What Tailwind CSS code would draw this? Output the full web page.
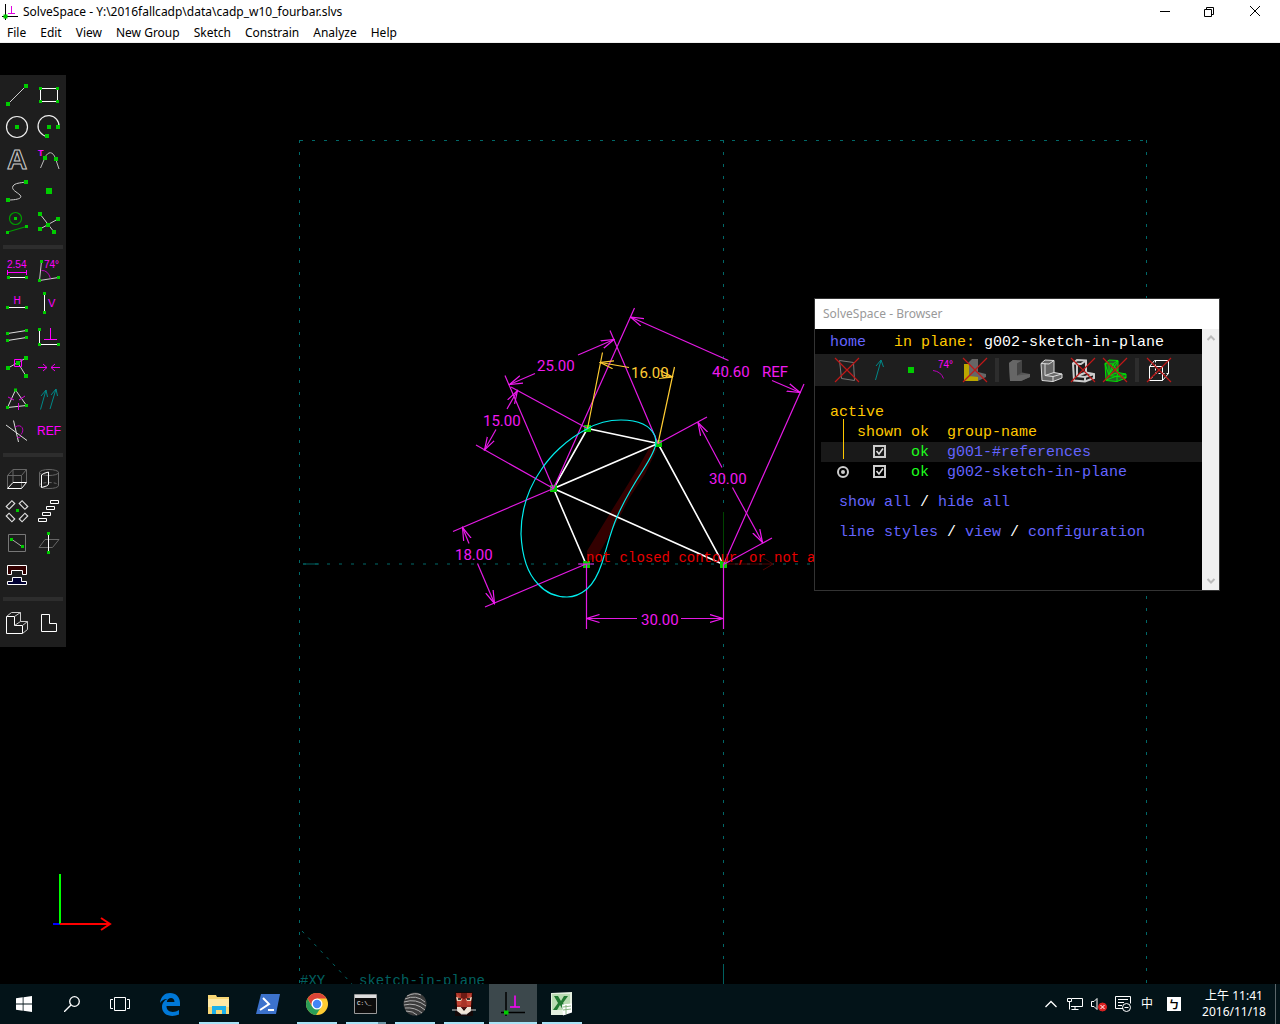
<!DOCTYPE html>
<html lang="en">
<head>
<meta charset="utf-8">
<title>SolveSpace - Y:\2016fallcadp\data\cadp_w10_fourbar.slvs</title>
<script src="https://cdn.jsdelivr.net/npm/@tailwindcss/browser@4"></script>
</head>
<body class="flex h-screen flex-col overflow-hidden bg-black font-['Noto_Sans','Noto_Sans_CJK_TC',sans-serif] text-xs text-black">

<header class="shrink-0 border-b border-[#f0f0f0] bg-white">
  <div class="flex h-6 items-center pr-[3px] pl-[2px]">
    <svg class="size-4 shrink-0" viewBox="0 0 16 16" fill="none" stroke="#000"><path d="M3.500 0v16M0 12.500h16"/><path d="M6 9.500h7M9.500 2v8" stroke="#e000e0"/><rect x="2" y="11" width="3" height="3" fill="#0c0" stroke="#0c0"/></svg>
    <h1 class="ml-[5px] flex-1 whitespace-nowrap">SolveSpace - Y:\2016fallcadp\data\cadp_w10_fourbar.slvs</h1>
    <button aria-label="Minimize" class="grid h-6 w-[45px] place-items-center"><svg class="size-3" viewBox="0 0 12 12" stroke="#000"><path d="M1 5.500h10"/></svg></button>
    <button aria-label="Restore" class="grid h-6 w-[45px] place-items-center"><svg class="size-3" viewBox="0 0 12 12" fill="none" stroke="#000"><path d="M.5 3.500h7v7h-7zM2.500 3.500v-2h7v7h-2"/></svg></button>
    <button aria-label="Close" class="grid h-6 w-[45px] place-items-center"><svg class="size-3" viewBox="0 0 12 12" stroke="#000"><path d="M1 0l10 10M11 0L1 10"/></svg></button>
  </div>
  <nav class="flex h-[18px] items-center" aria-label="Menu">
    <button class="px-[7px]">File</button><button class="px-[7px]">Edit</button><button class="px-[7px]">View</button><button class="px-[7px]">New Group</button><button class="px-[7px]">Sketch</button><button class="px-[7px]">Constrain</button><button class="px-[7px]">Analyze</button><button class="px-[7px]">Help</button>
  </nav>
</header>

<main class="relative min-h-0 flex-1 overflow-hidden bg-black">
  <svg class="block h-full w-full" viewBox="0 43 1280 941" preserveAspectRatio="xMidYMid slice" fill="none">
    <defs>
      <marker id="arr" viewBox="0 0 14 10" refX="13" refY="5" markerWidth="14" markerHeight="10" markerUnits="userSpaceOnUse" orient="auto-start-reverse"><path d="M0 1L13 5L0 9" fill="none" stroke="#f01af0" stroke-width="1.200"/></marker>
      <marker id="arrY" viewBox="0 0 14 10" refX="13" refY="5" markerWidth="14" markerHeight="10" markerUnits="userSpaceOnUse" orient="auto-start-reverse"><path d="M0 1L13 5L0 9" fill="none" stroke="#fc3" stroke-width="1.200"/></marker>
    </defs>
    <!-- workplane outline and axes -->
    <g stroke="#006868" stroke-dasharray="3 9">
      <path d="M300 140.500H1147M299.500 140V984M1146.500 140V984M303 564H1147M723.500 140V984"/>
      <path d="M302 931L352 984" stroke-dasharray="3 6"/>
    </g>
    <path d="M303 564h16M723.500 964v20" stroke="#006060"/>
    <path d="M723.500 512v52" stroke="#004400"/>
    <path d="M723.500 564h49M763 558l10 6l-10 6" stroke="#500000"/>
    <path d="M587 551V562L597 557L618 520L630 497L645 474L657 449L651 445L638 468L612 510Z" fill="#330000"/>
    <!-- linkage -->
    <path d="M587.500 428.500L658 443.500L553.500 488.500ZM553.500 488.500L586 564M553.500 488.500L723.500 564.500L658 443.500" stroke="#fff" stroke-width="1.600"/>
    <g fill="#00c800"><path d="M584 425h7v7h-7zM655 440h7v7h-7zM550 485h7v7h-7zM583 561h7v7h-7zM720 561h7v7h-7z"/></g>
    <!-- dimensions -->
    <g stroke="#e41ae4" stroke-width="1.200">
      <path d="M587.500 428.500L511 387M553.500 488.500L505 375.500M658 443.500L610 330.500M553.500 488.500L476 445M553.500 488.500L634.500 308M723.500 564.500L804 384M658 443.500L707 417M723.500 564.500L772 538M553.500 488.500L453 531.500M586 564L485 607M586.500 564V629M723.500 564V629M578 564h16"/>
      <g marker-end="url(#arr)">
        <path d="M535 373.500L509.500 384.500"/><path d="M578 355L614 339.500"/><path d="M496 429.500L484.500 450"/><path d="M507 409L517.500 390.500"/>
        <path d="M728.500 360.500L630.500 317"/><path d="M772 380.500L800 392.500"/><path d="M722 467.500L698 422.500"/><path d="M732.500 487.500L762.500 542.500"/>
        <path d="M469 543.500L462.500 527.500"/><path d="M477.500 563.500L494.500 603.500"/><path d="M637 618.500H586.500"/><path d="M681 618.500H723"/>
      </g>
    </g>
    <path d="M655 436C650 425 637 420 621 420C608 420 597 423 587 429C567 439 550 456 541 470C527 490 521 512 521 534C522 556 528 574 538 584C546 593 557 597 567 597C575 597 581 594 587 589C594 583 598 575 602 563C608 544 611 530 617 517C623 503 632 487 643 470C650 459 656 449 656 442Z" stroke="#0ee" stroke-width="1.200"/>
    <g stroke="#fc3" stroke-width="1.200">
      <path d="M587.500 428.500L602.500 352.500M658 443.500L674.500 367"/>
      <path d="M629 367.500L600.500 362.500" marker-end="url(#arrY)"/><path d="M662 375L672.500 377" marker-end="url(#arrY)"/>
    </g>
    <g fill="#f01af0" class="font-['Roboto',sans-serif] text-[15px] font-normal">
      <text x="537" y="371">25.00</text><text x="483" y="426">15.00</text><text x="712" y="377">40.60<tspan x="762">REF</tspan></text>
      <text x="709" y="484">30.00</text><text x="455" y="560">18.00</text><text x="641" y="625">30.00</text><text x="631" y="378" fill="#fc3">16.00</text>
    </g>
    <g class="font-['Liberation_Mono',monospace] text-[14px] whitespace-pre">
      <text x="586" y="562" fill="#e80000">not closed contour, <tspan x="749">or </tspan><tspan x="774">not </tspan><tspan x="807">all same style!</tspan></text>
      <text x="300" y="985" fill="#006060">#XY<tspan x="359">sketch-in-plane</tspan></text>
    </g>
    <!-- orientation axes -->
    <g stroke-width="2"><path d="M53 924h7" stroke="#00f"/><path d="M60 924V874" stroke="#0f0"/><path d="M60 924h50M101 918l9 6l-9 6" stroke="#f00"/></g>
  </svg>

  <!-- tool palette -->
  <aside class="absolute top-8 left-0 w-[66px] bg-[#1e1e1e] px-px pt-1 pb-2 font-['Liberation_Sans',sans-serif]" aria-label="Tools">
    <div class="grid grid-cols-2">
      <button aria-label="Line segment"><svg class="size-8" viewBox="0 0 32 32" fill="none" stroke="#ccc"><path d="M7 25L25 7"/><path d="M7 25h0M25 7h0" stroke="#0c0" stroke-width="4" stroke-linecap="square"/></svg></button>
      <button aria-label="Rectangle"><svg class="size-8" viewBox="0 0 32 32" fill="none" stroke="#fff"><path d="M7.500 9.500h17v13h-17z"/><path d="M7.500 9.500h0M24.500 9.500h0M7.500 22.500h0M24.500 22.500h0" stroke="#0c0" stroke-width="3" stroke-linecap="square"/></svg></button>
      <button aria-label="Circle"><svg class="size-8" viewBox="0 0 32 32" fill="none" stroke="#eee" stroke-width="1.200"><circle cx="16" cy="16" r="10.500"/><path d="M16 16h0" stroke="#0c0" stroke-width="4" stroke-linecap="square"/></svg></button>
      <button aria-label="Arc"><svg class="size-8" viewBox="0 0 32 32" fill="none" stroke="#eee" stroke-width="1.200"><path d="M26 16A10.500 10.500 0 1 0 14 25.500"/><path d="M16 16h0M25 16h0M14 25h0" stroke="#0c0" stroke-width="4" stroke-linecap="square"/></svg></button>
      <button aria-label="Text in TrueType font"><svg class="size-8" viewBox="0 0 32 32" fill="none" stroke="#ccc"><text x="16" y="26" text-anchor="middle" class="text-[28px] font-bold">A</text></svg></button>
      <button aria-label="Tangent arc"><svg class="size-8" viewBox="0 0 32 32" fill="none" stroke="#bbb"><path d="M7.500 25L12 14.500C15 8 20 8 22.500 15.500L26 26"/><path d="M12 15h0M23 16h0" stroke="#0c0" stroke-width="4" stroke-linecap="square"/><text x="5" y="13" fill="#f0f" stroke="none" class="text-[9px] font-bold">T</text></svg></button>
      <button aria-label="Bezier curve"><svg class="size-8" viewBox="0 0 32 32" fill="none" stroke="#ccc"><path d="M7 25C17 25 22 23 19 20C16 17 10 15 12 11C14 8 19 8 25 7"/><path d="M7 25h0M25 7h0" stroke="#0c0" stroke-width="4" stroke-linecap="square"/></svg></button>
      <button aria-label="Point"><svg class="size-8" viewBox="0 0 32 32"><path d="M13 13h6v6h-6z" fill="#0c0"/></svg></button>
      <button aria-label="Toggle construction"><svg class="size-8" viewBox="0 0 32 32" fill="none" stroke="#009c00" stroke-width="1.200"><circle cx="14.500" cy="11.500" r="6"/><path d="M6.500 25L25.500 19.500"/><path d="M14.500 11.500h0M6.500 25.500h0M25.500 19.500h0" stroke="#0c0" stroke-width="3" stroke-linecap="square"/></svg></button>
      <button aria-label="Split curves"><svg class="size-8" viewBox="0 0 32 32" fill="none" stroke="#ccc"><path d="M7 7L21 25M7 22L25 12"/><path d="M7 7h0M21 25h0M7 22h0M25 12h0M15 18h0" stroke="#0c0" stroke-width="4" stroke-linecap="square"/></svg></button>
    </div>
    <hr class="mx-0.5 my-1.5 h-1 border-0 bg-[#2d2d2d]">
    <div class="grid grid-cols-2">
      <button aria-label="Constrain distance"><svg class="size-8" viewBox="0 0 32 32" fill="none" stroke="#f0f"><text x="6" y="13" fill="#f0f" stroke="none" class="text-[10px]">2.54</text><path d="M6.500 15v5M25.500 15v5M7 17.500h18"/><path d="M7 22.500h18" stroke="#fff"/><path d="M7.500 22.500h0M25.500 22.500h0" stroke="#0c0" stroke-width="3" stroke-linecap="square"/></svg></button>
      <button aria-label="Constrain angle"><svg class="size-8" viewBox="0 0 32 32" fill="none" stroke="#ccc"><path d="M8.500 6L6.500 25.500L25.500 22.500"/><path d="M8.500 15.500Q15 15 17.500 23.500" stroke="#b0b"/><text x="11" y="13" fill="#f0f" stroke="none" class="text-[10px]">74°</text><path d="M8.500 6.500h0M6.500 25.500h0M25.500 22.500h0" stroke="#0c0" stroke-width="3" stroke-linecap="square"/></svg></button>
      <button aria-label="Horizontal"><svg class="size-8" viewBox="0 0 32 32" fill="none" stroke="#fff"><text x="16" y="17" text-anchor="middle" fill="#f0f" stroke="none" class="text-[10px]">H</text><path d="M7 20.500h18"/><path d="M6.500 20.500h0M25.500 20.500h0" stroke="#0c0" stroke-width="3" stroke-linecap="square"/></svg></button>
      <button aria-label="Vertical"><svg class="size-8" viewBox="0 0 32 32" fill="none" stroke="#fff"><text x="15" y="20" fill="#f0f" stroke="none" class="text-[11px]">V</text><path d="M11.500 7v18"/><path d="M11.500 6.500h0M11.500 25.500h0" stroke="#0c0" stroke-width="3" stroke-linecap="square"/></svg></button>
      <button aria-label="Parallel"><svg class="size-8" viewBox="0 0 32 32" fill="none" stroke="#ddd"><path d="M6.500 14.500L25.500 11.500M6.500 21.500L25.500 18.500"/><path d="M6.500 14.500h0M25.500 11.500h0M6.500 21.500h0M25.500 18.500h0" stroke="#0c0" stroke-width="3" stroke-linecap="square"/></svg></button>
      <button aria-label="Perpendicular"><svg class="size-8" viewBox="0 0 32 32" fill="none" stroke="#fff"><path d="M6.500 10.500v15h19"/><path d="M11 20.500h13M17.500 9v11" stroke="#f0f"/><path d="M6.500 10.500h0M6.500 25.500h0M25.500 25.500h0" stroke="#0c0" stroke-width="3" stroke-linecap="square"/></svg></button>
      <button aria-label="Point on object"><svg class="size-8" viewBox="0 0 32 32" fill="none" stroke="#ccc"><path d="M7 17L25 7M17 12L25 25"/><path d="M7 17h0M25 7h0M17 12h0M25 25h0" stroke="#0c0" stroke-width="4" stroke-linecap="square"/><path d="M13.500 8.500h7v7h-7z" stroke="#f0f"/></svg></button>
      <button aria-label="Symmetric"><svg class="size-8" viewBox="0 0 32 32" fill="none" stroke="#e0e"><path d="M5 16.500h9M10 13l4 3.500l-4 3.500M27 16.500h-9M22 13l-4 3.500l4 3.500"/></svg></button>
      <button aria-label="Equal length"><svg class="size-8" viewBox="0 0 32 32" fill="none" stroke="#ddd"><path d="M14.500 7L6.500 24.500L25.500 22.500Z"/><path d="M7 14l6 3M18 17l6-4M17.500 20v7" stroke="#d0d"/><path d="M14.500 7h0M6.500 24.500h0M25.500 22.500h0" stroke="#0c0" stroke-width="3" stroke-linecap="square"/></svg></button>
      <button aria-label="Same orientation"><svg class="size-8" viewBox="0 0 32 32" fill="none" stroke="#088"><path d="M7.500 26.500L13 7M8 13l5-6l1.500 7M17 26L23 6M18 12l5-6l1.500 7"/></svg></button>
      <button aria-label="Other supplementary angle"><svg class="size-8" viewBox="0 0 32 32" fill="none" stroke="#ddd"><path d="M5 10L26 25.500M12.500 5.500L17.500 27"/><path d="M14 12C21 8 24 15 20 19.500M20 21Q18 24 16 22" stroke="#b0b"/></svg></button>
      <button aria-label="Toggle reference dimension"><svg class="size-8" viewBox="0 0 32 32"><text x="16" y="20" text-anchor="middle" fill="#f0f" class="text-[12px]">REF</text></svg></button>
    </div>
    <hr class="mx-0.5 my-1.5 h-1 border-0 bg-[#2d2d2d]">
    <div class="grid grid-cols-2">
      <button aria-label="Extrude"><svg class="size-8" viewBox="0 0 32 32" fill="none" stroke="#666"><path d="M6.500 12.500h14v13M6.500 25v-12.500l5.500-6h13.500v13M20.500 12.500l5-6M12 6.500v13"/><path d="M6.500 25.500h14l5-6H12z" stroke="#fff"/></svg></button>
      <button aria-label="Lathe"><svg class="size-8" viewBox="0 0 32 32" fill="none" stroke="#666"><ellipse cx="16" cy="9.500" rx="9.500" ry="3"/><path d="M6.500 9.500v13c0 4 19 4 19 0v-13"/><path d="M6.500 22.500c0-4 19-4 19 0" stroke-dasharray="3 2"/><path d="M8.500 12l2-1.500l5-1.500v12.500l-2 1.500l-5 1.500z" stroke="#fff"/></svg></button>
      <button aria-label="Step rotating"><svg class="size-8" viewBox="0 0 32 32" fill="none" stroke="#ddd" stroke-width="1.200"><rect x="5.500" y="8" width="8" height="4" transform="rotate(-45 9.500 10)"/><rect x="18.500" y="8" width="8" height="4" transform="rotate(45 22.500 10)"/><rect x="5.500" y="20.500" width="8" height="4" transform="rotate(45 9.500 22.500)"/><rect x="18.500" y="20.500" width="8" height="4" transform="rotate(-45 22.500 22.500)"/><path d="M15 14h3v3h-3z" fill="#0c0" stroke="none"/></svg></button>
      <button aria-label="Step translating"><svg class="size-8" viewBox="0 0 32 32" fill="none" stroke="#fff"><path d="M17.500 5.500h8v3h-8zM13.500 11.500h8v3h-8zM9.500 17.500h8v3h-8zM5.500 23.500h8v3h-8z"/></svg></button>
      <button aria-label="Sketch in workplane"><svg class="size-8" viewBox="0 0 32 32" fill="none" stroke="#777"><path d="M7.500 7.500h17v17h-17z"/><path d="M11 12.500L21 19.500" stroke="#aaa"/><path d="M10.500 12.500h0M21.500 19.500h0" stroke="#0c0" stroke-width="3" stroke-linecap="square"/></svg></button>
      <button aria-label="Sketch in 3D"><svg class="size-8" viewBox="0 0 32 32" fill="none" stroke="#666"><path d="M12 12.500h14L19.500 20.500H6z"/><path d="M15.500 7v18" stroke="#fff"/><path d="M15.500 6.500h0M15.500 25.500h0" stroke="#0c0" stroke-width="3" stroke-linecap="square"/></svg></button>
      <button aria-label="Assemble"><svg class="size-8" viewBox="0 0 32 32" stroke="#fff"><path d="M6.500 6.500h19v9h-4v-4h-11v4h-4z" fill="#300"/><path d="M6.500 25.500v-3h5v-4h9v4h5v3z" fill="#003"/></svg></button>
    </div>
    <hr class="mx-0.5 my-1.5 h-1 border-0 bg-[#2d2d2d]">
    <div class="grid grid-cols-2">
      <button aria-label="Isometric view"><svg class="size-8" viewBox="0 0 32 32" fill="none" stroke="#fff"><path d="M5.500 9.500h8v9h8v8h-16z"/><path d="M5.500 9.500l5-4h9l-6 4M19.500 5.500v9l-6 4M19.500 14.500h7v8l-5 4M21.500 18.500l5-4" stroke="#ccc"/></svg></button>
      <button aria-label="Align to workplane"><svg class="size-8" viewBox="0 0 32 32" fill="none" stroke="#fff"><path d="M8.500 7.500h8v9h7v8h-15z"/></svg></button>
    </div>
  </aside>

  <!-- property browser window -->
  <section class="absolute top-[255px] right-[60px] w-[406px] border border-[#333] bg-black" aria-label="SolveSpace - Browser">
    <h2 class="flex h-[30px] items-center bg-white px-2 text-[#999]">SolveSpace - Browser</h2>
    <div class="flex h-[261px]">
      <div class="min-w-0 flex-1 font-['Liberation_Mono',monospace] text-[15px] leading-5">
        <p class="flex gap-[28px] pt-1 pb-px pl-[15px] whitespace-nowrap"><a href="#" class="text-[#6464ff]">home</a><span class="text-[#ffc800]">in plane: <span class="text-white">g002-sketch-in-plane</span></span></p>
        <div class="flex h-8 items-center bg-[#1e1e1e] pl-4">
          <button aria-label="Workplanes"><svg class="block size-8" viewBox="0 0 32 32" fill="none" stroke="#777"><path d="M8.500 6.500l14 2l1 18l-13-2z"/><path d="M4 4l24 24M28 4L4 28" stroke="#c01818" stroke-width="1.200"/></svg></button>
          <button aria-label="Normals"><svg class="block size-8" viewBox="0 0 32 32" fill="none" stroke="#088"><path d="M12.500 26L18 6.500M13 12l5-6l2.500 7"/></svg></button>
          <button aria-label="Points"><svg class="block size-8" viewBox="0 0 32 32"><path d="M13 13h6v6h-6z" fill="#0c0"/></svg></button>
          <button aria-label="Constraints"><svg class="block size-8" viewBox="0 0 32 32" fill="none" stroke="#b0b"><path d="M6 16.500q8 1 10.500 8"/><text x="11" y="14" fill="#f0f" stroke="none" class="font-['Liberation_Sans',sans-serif] text-[10px]">74°</text></svg></button>
          <button aria-label="Faces"><svg class="block size-8" viewBox="0 0 32 32"><path d="M9 9l4-4h6v13l8 2v3l-8 4l-10-6z" fill="#666"/><path d="M5 10h5v12l9 1v4H5z" fill="#bba600"/><path d="M4 4l24 24M28 4L4 28" stroke="#c01818" stroke-width="1.200"/></svg></button>
          <span class="mx-1 h-6 w-1 bg-[#2d2d2d]"></span>
          <button aria-label="Shaded"><svg class="block size-8" viewBox="0 0 32 32"><path d="M6 9l4-3l9 .5v12l8 1.500v3l-9 4H7z" fill="#555"/><path d="M6 9l4-3l9 .5l-5 3v12l13-1.500v3l-9 4H7z" fill="#666"/><path d="M14 9.500l5-3v12l-5 3z" fill="#444"/></svg></button>
          <button aria-label="Edges"><svg class="block size-8" viewBox="0 0 32 32" stroke="#ddd"><path d="M6 9.500l4-3.500l9 .5v12l8 1.500v4l-9 3.500l-11-1z" fill="#666"/><path d="M6 9.500l8 .5l5-3.500M10 9.500v12l8 1l9-2.500M10 21.500l9-3M18 22.500v4.500" fill="none"/></svg></button>
          <button aria-label="Outlines"><svg class="block size-8" viewBox="0 0 32 32" stroke="#ccc" stroke-width="2" fill="none"><path d="M6 9.500l4-3.500l9 .5v12l8 1.500v4l-9 3.500l-11-1z"/><path d="M6 9.500l8 .5l5-3.500M10 10v12l8 1l9-3M10 22l9-3.500M18 23v4"/><path d="M4 4l24 24M28 4L4 28" stroke="#c01818" stroke-width="1.200"/></svg></button>
          <button aria-label="Mesh"><svg class="block size-8" viewBox="0 0 32 32" stroke="#00e000"><path d="M6 9.500l4-3.500l9 .5v12l8 1.500v4l-9 3.500l-11-1z" fill="#286028"/><path d="M6 9.500l8 .5l5-3.500M10 9.500v12l8 1l9-2.500M10 21.500l9-3M18 22.500v4.500M6 9.500l4 12L7 26l11-4M14 10l-4 11L19 7M14 10l5 8.500l-1 4l9 1" fill="none"/><path d="M4 4l24 24M28 4L4 28" stroke="#c01818" stroke-width="1.200"/></svg></button>
          <span class="mx-1 h-6 w-1 bg-[#2d2d2d]"></span>
          <button aria-label="Hidden lines"><svg class="block size-8" viewBox="0 0 32 32" fill="none" stroke="#fff"><path d="M6.500 12.500h13v14h-13zM6.500 12.500l5-6h14v13l-6 7M19.500 12.500l6-6"/><path d="M12.500 6.500v13h13M12 20l-5 6" stroke-dasharray="2 2"/><path d="M4 4l24 24M28 4L4 28" stroke="#c01818" stroke-width="1.200"/></svg></button>
        </div>
        <div class="relative pt-4 pl-1.5">
          <span class="absolute top-[33px] left-7 z-10 h-10 w-px bg-[#ffc800]"></span>
          <table class="w-full table-fixed border-collapse text-left text-[#ffc800]">
            <colgroup><col class="w-9"><col class="w-[54px]"><col class="w-9"><col></colgroup>
            <thead>
              <tr class="h-5"><th class="p-0 pt-px pl-[9px] leading-[19px] font-normal" colspan="4">active</th></tr>
              <tr class="h-5 leading-[19px]"><td class="p-0"></td><th class="p-0 pt-px font-normal">shown</th><th class="p-0 pt-px font-normal">ok</th><th class="p-0 pt-px font-normal">group-name</th></tr>
            </thead>
            <tbody class="leading-[19px]">
              <tr class="h-5 bg-[#191919]">
                <td class="p-0"></td>
                <td class="p-0 pb-px pl-4"><label class="relative block size-[13px]"><input type="checkbox" checked aria-label="Show g001" class="block size-[13px] appearance-none border-2 border-[#ccc]"><svg class="absolute inset-0 size-[13px]" viewBox="0 0 13 13" fill="none" stroke="#ddd" stroke-width="1.600"><path d="M3.500 6l2.500 3l4-5.500"/></svg></label></td>
                <td class="p-0 pt-px text-[#1eff1e]">ok</td><td class="p-0 pt-px"><a href="#" class="text-[#6464ff]">g001-#references</a></td>
              </tr>
              <tr class="h-5">
                <td class="p-0 pb-px pl-4"><input type="radio" checked aria-label="Activate g002" class="grid size-3 appearance-none place-items-center rounded-full border-2 border-[#ccc] before:size-1 before:rounded-full before:bg-[#ccc]"></td>
                <td class="p-0 pb-px pl-4"><label class="relative block size-[13px]"><input type="checkbox" checked aria-label="Show g002" class="block size-[13px] appearance-none border-2 border-[#ccc]"><svg class="absolute inset-0 size-[13px]" viewBox="0 0 13 13" fill="none" stroke="#ddd" stroke-width="1.600"><path d="M3.500 6l2.500 3l4-5.500"/></svg></label></td>
                <td class="p-0 pt-px text-[#1eff1e]">ok</td><td class="p-0 pt-px"><a href="#" class="text-[#6464ff]">g002-sketch-in-plane</a></td>
              </tr>
            </tbody>
          </table>
        </div>
        <p class="mt-[11px] pl-6 text-white"><a href="#" class="text-[#6464ff]">show all</a> / <a href="#" class="text-[#6464ff]">hide all</a></p>
        <p class="mt-2.5 pl-6 text-white"><a href="#" class="text-[#6464ff]">line styles</a> / <a href="#" class="text-[#6464ff]">view</a> / <a href="#" class="text-[#6464ff]">configuration</a></p>
      </div>
      <div class="flex w-[17px] shrink-0 flex-col items-center justify-between bg-[#f0f0f0] py-1">
        <button aria-label="Scroll up"><svg class="block size-2.5" viewBox="0 0 10 10" fill="none" stroke="#bbb" stroke-width="2"><path d="M1.500 7L5 3.500L8.500 7"/></svg></button>
        <button aria-label="Scroll down"><svg class="block size-2.5" viewBox="0 0 10 10" fill="none" stroke="#bbb" stroke-width="2"><path d="M1.500 3L5 6.500L8.500 3"/></svg></button>
      </div>
    </div>
  </section>
</main>

<footer class="flex h-10 shrink-0 items-stretch bg-[#031318] text-white">
  <button aria-label="Start" class="grid w-12 place-items-center"><svg class="size-4" viewBox="0 0 16 16" fill="#fff"><path d="M0 2.300L6.700 1.300V7.500H0zM7.500 1.200L16 0V7.500H7.500zM0 8.500H6.700V14.700L0 13.700zM7.500 8.500H16V16L7.500 14.800z"/></svg></button>
  <button aria-label="Search" class="grid w-12 place-items-center"><svg class="size-4" viewBox="0 0 16 16" fill="none" stroke="#fff" stroke-width="1.300"><circle cx="10.500" cy="5.500" r="4.800"/><path d="M7 9L0 16"/></svg></button>
  <button aria-label="Task view" class="grid w-12 place-items-center"><svg class="h-4 w-5" viewBox="0 0 20 16" fill="none" stroke="#fff"><path d="M4.500 1.500h11v13h-11zM3 3.500H.5v9H3M17 3.500h2.500v9H17"/></svg></button>
  <div class="ml-0.5 flex gap-px">
    <button aria-label="Microsoft Edge" class="grid w-12 place-items-center"><svg class="size-6" viewBox="0 0 24 24"><path d="M2 11C3 4 7 1 12 1c6 0 10 4 10 10v3H8.500c0 7 8 7 12.500 4v4.500C13 26 4 23 4 15c0-4 2.500-7 5.500-8C7 6.500 4 8 2 11zM8.800 10h7.700c0-5.500-7-5-7.700 0z" fill="#0078d7"/></svg></button>
    <button aria-label="File Explorer" class="relative grid w-12 place-items-center"><svg class="size-6" viewBox="0 0 24 24"><path d="M1 3h8l1 2h12v17H1z" fill="#f8d775"/><path d="M1 7h21v8H1z" fill="#ffe9a6"/><path d="M5 14h14v8h-4v-4H9v4H5z" fill="#1cb0ea"/></svg><span class="absolute inset-x-1 bottom-0 h-0.5 bg-[#a8e4f7]"></span></button>
    <button aria-label="PowerShell" class="grid w-12 place-items-center"><svg class="size-6" viewBox="0 0 24 24"><path d="M5 2h19l-4 20H0z" fill="#3c72cc"/><path d="M7 6l6 6l-9 6M12 18h6" fill="none" stroke="#fff" stroke-width="2"/></svg></button>
    <button aria-label="Chrome" class="relative grid w-12 place-items-center"><svg class="size-6" viewBox="0 0 24 24"><circle cx="12" cy="12" r="11" fill="#fc3"/><path d="M2.500 6.500A11 11 0 0 1 21.500 6.500H12L7.500 14.500z" fill="#db4437"/><path d="M2.500 6.500A11 11 0 0 0 11 23l5.500-8.500H7z" fill="#2a9d58"/><circle cx="12" cy="12" r="5.500" fill="#fff"/><circle cx="12" cy="12" r="4.200" fill="#4285f4"/></svg><span class="absolute inset-x-1 bottom-0 h-0.5 bg-[#a8e4f7]"></span></button>
    <button aria-label="Command Prompt" class="relative grid w-12 place-items-center"><svg class="size-6" viewBox="0 0 24 24"><path d="M.5 2.500h22v19H.5z" fill="#0c0c0c" stroke="#999"/><path d="M1 3h21v3H1z" fill="#ddd"/><text x="3" y="13" fill="#fff" class="font-['Liberation_Mono',monospace] text-[6px]">C:\_</text></svg><span class="absolute inset-x-1 bottom-0 h-0.5 border-r-8 border-[#6c98a8] bg-[#a8e4f7]"></span></button>
    <button aria-label="Striped sphere" class="relative grid w-12 place-items-center"><svg class="size-6" viewBox="0 0 24 24" fill="none"><circle cx="12" cy="12" r="11.500" fill="#3c3c3c"/><path d="M4 4q8-4 14-1M2 7q11-5 20 3M1 10q12-4 22 4M1 13q12-3 21 5M2 16q10-1 17 5M3 19q7 0 11 4" stroke="#b0b0b0"/></svg><span class="absolute inset-x-1 bottom-0 h-0.5 bg-[#a8e4f7]"></span></button>
    <button aria-label="Leo" class="relative grid w-12 place-items-center"><svg class="size-6" viewBox="0 0 24 24"><path d="M3 0h18v24H3z" fill="#140808"/><path d="M4 1h16l-1 14H5z" fill="#a83428"/><path d="M5 2l5 5l-1 6H5zM19 2l-5 5l1 6h4z" fill="#c44636"/><path d="M4 5l6 2l-1 2H5zM20 5l-6 2l1 2h4z" fill="#e8d8c0"/><path d="M6 7h3M15 7h3" stroke="#000" stroke-width="1.500"/><path d="M9 15h6l-3 4z" fill="#000"/><path d="M5 15h4l3 4l3-4h4v4l-4 3H9l-4-3z" fill="#f0e6d8"/><path d="M9 15h6l-3 3z" fill="#501010"/><path d="M12 1v6M10 1v5M14 1v5" stroke="#300"/><path d="M0 18h6M18 18h6M9 22h6" stroke="#ccc"/></svg><span class="absolute inset-x-1 bottom-0 h-0.5 bg-[#a8e4f7]"></span></button>
    <button aria-label="SolveSpace" class="relative grid w-12 place-items-center bg-[#3c484c]"><svg class="size-6" viewBox="0 0 24 24" fill="none" stroke="#000" stroke-width="1.500"><path d="M5 0v24M0 20.500h24"/><path d="M9 15h10M14 3.500V15" stroke="#f0f"/><path d="M3 18.500h4.500v4H3z" fill="#0c0" stroke="none"/></svg><span class="absolute inset-x-0 bottom-0 h-0.5 bg-[#a8e4f7]"></span></button>
    <button aria-label="Excel" class="relative grid w-12 place-items-center"><svg class="size-6" viewBox="0 0 24 24"><path d="M1 1l21-1v19l-8 4H1z" fill="#e4f0df"/><path d="M2 2h18v16H2z" fill="#b9dcb2"/><path d="M4 4h4l3 5l3-5h4l-5 7l4 7h-4l-3-5l-3 5H3l5-7z" fill="#217a32"/><path d="M12 12.500l10-1v9l-9 3z" fill="#fff"/><path d="M13 15l8-1M13 18l8-1M16 13v9" stroke="#8ab885"/></svg><span class="absolute inset-x-1 bottom-0 h-0.5 bg-[#a8e4f7]"></span></button>
  </div>
  <div class="ml-auto flex items-center gap-2">
    <button aria-label="Show hidden icons"><svg class="block size-4" viewBox="0 0 16 16" fill="none" stroke="#fff" stroke-width="1.300"><path d="M2.500 11L8 5.500L13.500 11"/></svg></button>
    <button aria-label="Network"><svg class="block size-4" viewBox="0 0 16 16" fill="none" stroke="#fff"><path d="M5 2.500h10.500v8H4M8 10.500v3M4.500 13.500h7M.5 2.500h4v3h-4zM2.500 5.500v8"/></svg></button>
    <button aria-label="Volume"><svg class="block size-4" viewBox="0 0 16 16" fill="none" stroke="#fff"><path d="M.5 5.500H3l3-3v11l-3-3H.5z"/><circle cx="11.500" cy="11" r="4" fill="#d22" stroke="#d22"/><path d="M9.500 9l4 4M13.500 9l-4 4"/></svg></button>
    <button aria-label="Notifications"><svg class="block size-4" viewBox="0 0 16 16" fill="none" stroke="#fff"><path d="M8 12.500H.5V.5h15v7M3 3.500h10M3 6.500h6M3 9.500h4"/><circle cx="11.500" cy="11.500" r="4"/><path d="M9.500 11.500h4"/></svg></button>
    <button aria-label="Input language" class="w-4 text-xs">中</button>
    <button aria-label="Bopomofo" class="ml-1 grid h-3.5 w-3.5 place-items-center bg-white text-[11px] leading-none font-bold text-black">ㄅ</button>
    <time class="ml-1.5 w-[78px] text-center leading-4" datetime="2016-11-18T11:41">上午 11:41<br>2016/11/18</time>
    <span class="-ml-1.5 mr-1 h-full w-px bg-[#5c666a]"></span>
  </div>
</footer>
</body>
</html>
